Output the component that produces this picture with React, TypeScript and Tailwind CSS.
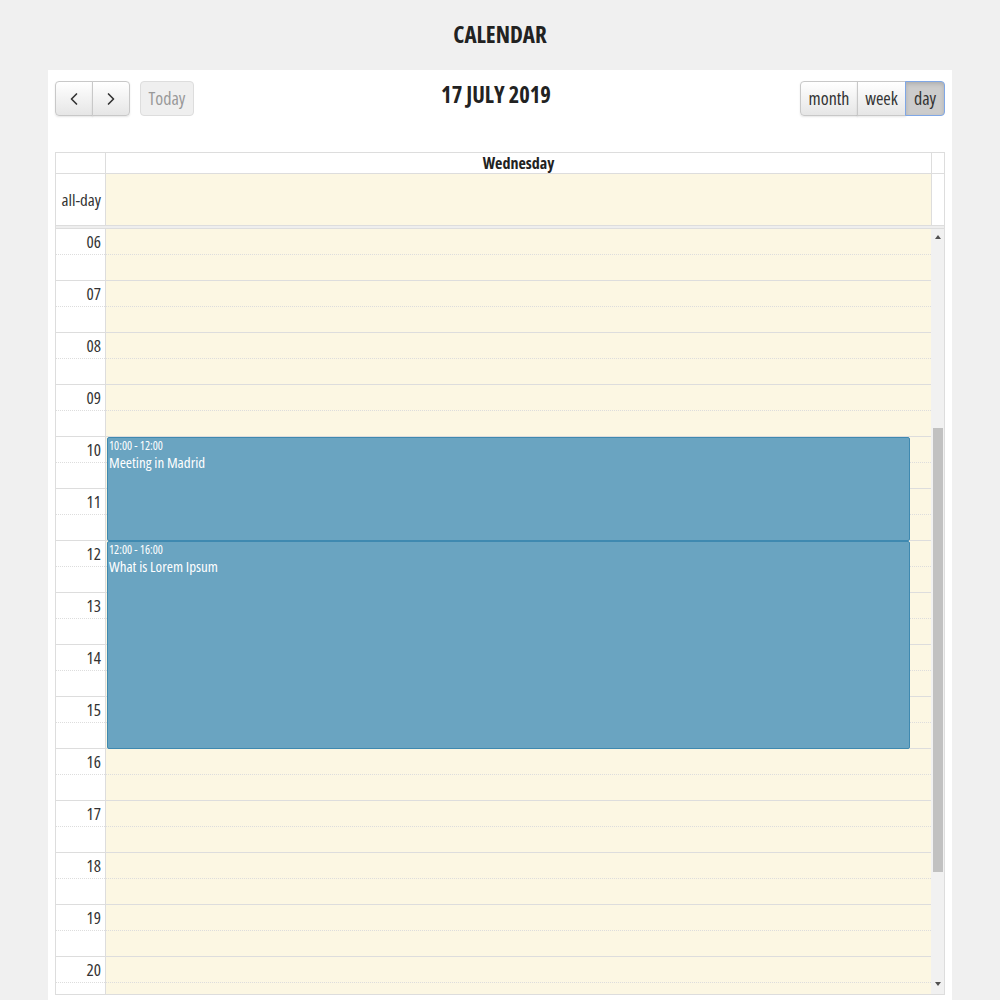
import { ChevronLeft, ChevronRight } from "lucide-react";

const HOURS = ["06", "07", "08", "09", "10", "11", "12", "13", "14", "15", "16", "17", "18", "19", "20"];

const EVENTS = [
  { start: 10, end: 12, time: "10:00 - 12:00", title: "Meeting in Madrid" },
  { start: 12, end: 16, time: "12:00 - 16:00", title: "What is Lorem Ipsum" },
];

const ROW = 52;
const FIRST_HOUR = 6;

const btn =
  "flex h-[35px] items-center justify-center border border-[#c8c8c8] bg-gradient-to-b from-white to-[#e6e6e6] text-[#333] shadow-[inset_0_1px_0_rgba(255,255,255,0.2),0_1px_2px_rgba(0,0,0,0.1)]";

export default function App() {
  return (
    <div className="min-h-screen bg-[#f0f0f0] font-['Open_Sans',sans-serif] font-stretch-condensed text-[#333]">
      <h1 className="pt-[19px] text-center text-[23px] font-bold leading-[30px] text-[#222]">CALENDAR</h1>

      <div className="mx-[48px] mt-[21px] bg-white px-[7px] pt-[11px] pb-[20px]">
        <div className="relative flex items-center justify-between">
          <div className="flex items-center gap-[10px]">
            <div className="flex">
              <button type="button" className={`${btn} w-[38px] rounded-l-[4px]`}>
                <ChevronLeft className="h-5 w-5" strokeWidth={2} />
              </button>
              <button type="button" className={`${btn} -ml-px w-[38px] rounded-r-[4px]`}>
                <ChevronRight className="h-5 w-5" strokeWidth={2} />
              </button>
            </div>
            <button
              type="button"
              className="flex h-[35px] w-[54px] items-center justify-center rounded-[4px] border border-[#ddd] bg-[#efefef] text-[18px] text-[#999]"
            >
              Today
            </button>
          </div>
          <h2 className="absolute left-[calc(50%-4px)] top-[-3px] -translate-x-1/2 text-[22.5px] font-bold text-[#222]">
            17 JULY 2019
          </h2>
          <div className="flex">
            <button type="button" className={`${btn} w-[58px] rounded-l-[4px] text-[18px]`}>
              month
            </button>
            <button type="button" className={`${btn} -ml-px w-[49px] text-[18px]`}>
              week
            </button>
            <button
              type="button"
              className="-ml-px flex h-[35px] w-[40px] items-center justify-center rounded-r-[4px] border border-[#7fa7e6] bg-[#cccccc] text-[18px] text-[#333] shadow-[inset_0_2px_4px_rgba(0,0,0,0.15)]"
            >
              day
            </button>
          </div>
        </div>

        <div className="mt-[36px] border border-[#ddd]">
          <div className="flex h-[21px] border-b border-[#ddd]">
            <div className="w-[50px] border-r border-[#ddd]" />
            <div className="flex flex-1 items-center justify-center text-[16px] font-bold text-[#222]">
              Wednesday
            </div>
            <div className="w-[13px] border-l border-[#ddd]" />
          </div>
          <div className="flex h-[51px]">
            <div className="flex w-[50px] items-center justify-end border-r border-[#ddd] pr-[4px] text-[17px]">
              all-day
            </div>
            <div className="flex-1 bg-[#fcf7e3]" />
            <div className="w-[13px] border-l border-[#ddd]" />
          </div>
          <div className="h-[4px] border-y border-[#ddd] bg-[#eee]" />

          <div className="flex h-[765px] overflow-hidden">
            <div className="w-[50px] shrink-0 border-r border-[#ddd]">
              {HOURS.map((h) => (
                <div key={h} className="h-[52px] border-b border-[#ddd]">
                  <div className="flex h-[26px] items-center justify-end border-b border-dotted border-[#ddd] pr-[4px] text-[17px]">
                    {h}
                  </div>
                </div>
              ))}
            </div>
            <div className="relative flex-1 bg-[#fcf7e3]">
              {HOURS.map((h) => (
                <div key={h} className="h-[52px] border-b border-[#ddd]">
                  <div className="h-[26px] border-b border-dotted border-[#ddd]" />
                </div>
              ))}
              {EVENTS.map((ev) => (
                <div
                  key={ev.title}
                  className="absolute left-[1px] right-[21px] rounded-[2px] border border-[#3f89b0] bg-[#6aa4c1] px-[1px] text-white"
                  style={{ top: (ev.start - FIRST_HOUR) * ROW, height: (ev.end - ev.start) * ROW }}
                >
                  <div className="pt-[1px] text-[12px] leading-[14px]">{ev.time}</div>
                  <div className="text-[15px] leading-[19px]">{ev.title}</div>
                </div>
              ))}
            </div>
            <div className="flex w-[13px] shrink-0 flex-col items-center bg-[#f1f1f1]">
              <div className="mt-[6px] h-0 w-0 border-x-[3px] border-b-[4px] border-x-transparent border-b-[#505050]" />
              <div className="mt-[189px] h-[444px] w-[10px] bg-[#c1c1c1]" />
              <div className="mt-auto mb-[8px] h-0 w-0 border-x-[3px] border-t-[4px] border-x-transparent border-t-[#505050]" />
            </div>
          </div>
        </div>
      </div>
    </div>
  );
}
